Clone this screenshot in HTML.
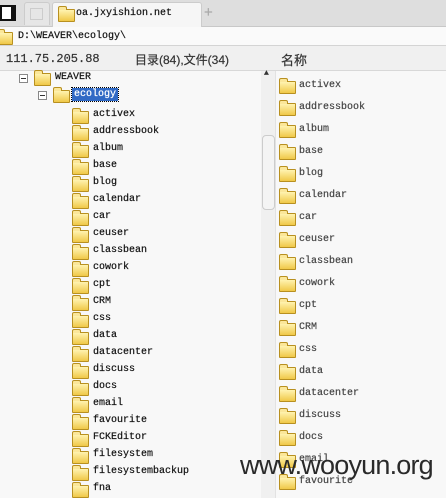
<!DOCTYPE html><html><head><meta charset="utf-8"><style>
body{margin:0;width:446px;height:498px;overflow:hidden;background:#f8f8f8;font-family:"Liberation Mono","Noto Sans CJK SC",monospace;font-size:10px;color:#111;position:relative}
.a{position:absolute}
.f{position:absolute;width:15px;height:11px;background:linear-gradient(#fff3b0,#f0c848);border:1px solid #b89020;border-radius:1px}
.f:before{content:"";position:absolute;left:-1px;top:-4px;width:7px;height:3px;border:1px solid #b89020;border-bottom:none;background:#fbe79a;border-radius:2px 2px 0 0}
.t{position:absolute;white-space:pre;-webkit-text-stroke:0.2px currentColor}
</style></head><body>
<div class="a" style="left:0;top:0;width:446px;height:26px;background:#dedede;border-bottom:1px solid #c8c8c8"></div>
<div class="a" style="left:0;top:5px;width:16px;height:16px;background:#111"></div>
<div class="a" style="left:2px;top:7px;width:9px;height:12px;background:#fff"></div>
<div class="a" style="left:24px;top:2px;width:24px;height:22px;background:#e6e6e6;border:1px solid #ccc;border-bottom:none;border-radius:3px 3px 0 0"></div>
<div class="a" style="left:30px;top:8px;width:11px;height:10px;border:1px solid #ccc"></div>
<div class="a" style="left:52px;top:2px;width:148px;height:25px;background:#f6f6f6;border:1px solid #ccc;border-bottom:none;border-radius:3px 3px 0 0"></div>
<div class="f" style="left:58px;top:9px"></div>
<div class="t" style="left:76px;top:8px">oa.jxyishion.net</div>
<div class="t" style="left:204px;top:4px;font-size:15px;color:#aaa;font-family:'Liberation Sans'">+</div>
<div class="a" style="left:0;top:27px;width:446px;height:18px;background:#fafafa;border-bottom:1px solid #d4d4d4"></div>
<div class="f" style="left:-4px;top:32px"></div>
<div class="t" style="left:18px;top:31px">D:\WEAVER\ecology\</div>
<div class="a" style="left:0;top:46px;width:446px;height:24px;background:#f0f0f0;border-bottom:1px solid #d8d8d8"></div>
<div class="t" style="left:6px;top:52px;font-size:12px;color:#333">111.75.205.88</div>
<div class="t" style="left:135px;top:51px;font-size:12px;color:#333;font-family:'Liberation Sans','Noto Sans CJK SC',sans-serif">目录(84),文件(34)</div>
<div class="t" style="left:281px;top:50px;font-size:13px;color:#333;font-family:'Liberation Sans','Noto Sans CJK SC',sans-serif">名称</div>
<div class="a" style="left:261px;top:71px;width:14px;height:427px;background:#f0f0f0"></div>
<div class="t" style="left:264px;top:69px;font-size:8px;color:#333">▲</div>
<div class="a" style="left:262px;top:135px;width:11px;height:73px;border:1px solid #ccc;border-radius:4px;background:#f4f4f4"></div>
<div class="a" style="left:275px;top:71px;width:1px;height:427px;background:#e2e2e2"></div>
<div class="a" style="left:19px;top:74px;width:7px;height:7px;border:1px solid #888;background:#fff"></div><div class="a" style="left:21px;top:78px;width:5px;height:1px;background:#333"></div>
<div class="f" style="left:34px;top:73px"></div><div class="t" style="left:55px;top:72px">WEAVER</div>
<div class="a" style="left:38px;top:91px;width:7px;height:7px;border:1px solid #888;background:#fff"></div><div class="a" style="left:40px;top:95px;width:5px;height:1px;background:#333"></div>
<div class="f" style="left:53px;top:90px"></div><div class="t" style="left:72px;top:88px;background:#316ac5;color:#fff;padding:1px 2px;outline:1px dotted #000">ecology</div>
<div id="L"></div><div id="R"></div>
<div class="t" style="left:240px;top:450px;font-size:27px;font-family:'Liberation Sans',sans-serif;color:#2a2a2a;letter-spacing:-0.8px;-webkit-text-stroke:0">www.wooyun.org</div>
<script>
var l=["activex","addressbook","album","base","blog","calendar","car","ceuser","classbean","cowork","cpt","CRM","css","data","datacenter","discuss","docs","email","favourite","FCKEditor","filesystem","filesystembackup","fna"],h="";
l.forEach(function(n,i){var y=109+i*17;h+='<div class="f" style="left:72px;top:'+(y+2)+'px"></div><div class="t" style="left:93px;top:'+y+'px">'+n+'</div>';});
document.getElementById("L").outerHTML=h;h="";
l.slice(0,19).forEach(function(n,i){var y=79+i*22;h+='<div class="f" style="left:279px;top:'+(y+2)+'px"></div><div class="t" style="left:299px;top:'+(y+1)+'px;color:#444">'+n+'</div>';});
document.getElementById("R").outerHTML=h;
</script>
</body></html>
